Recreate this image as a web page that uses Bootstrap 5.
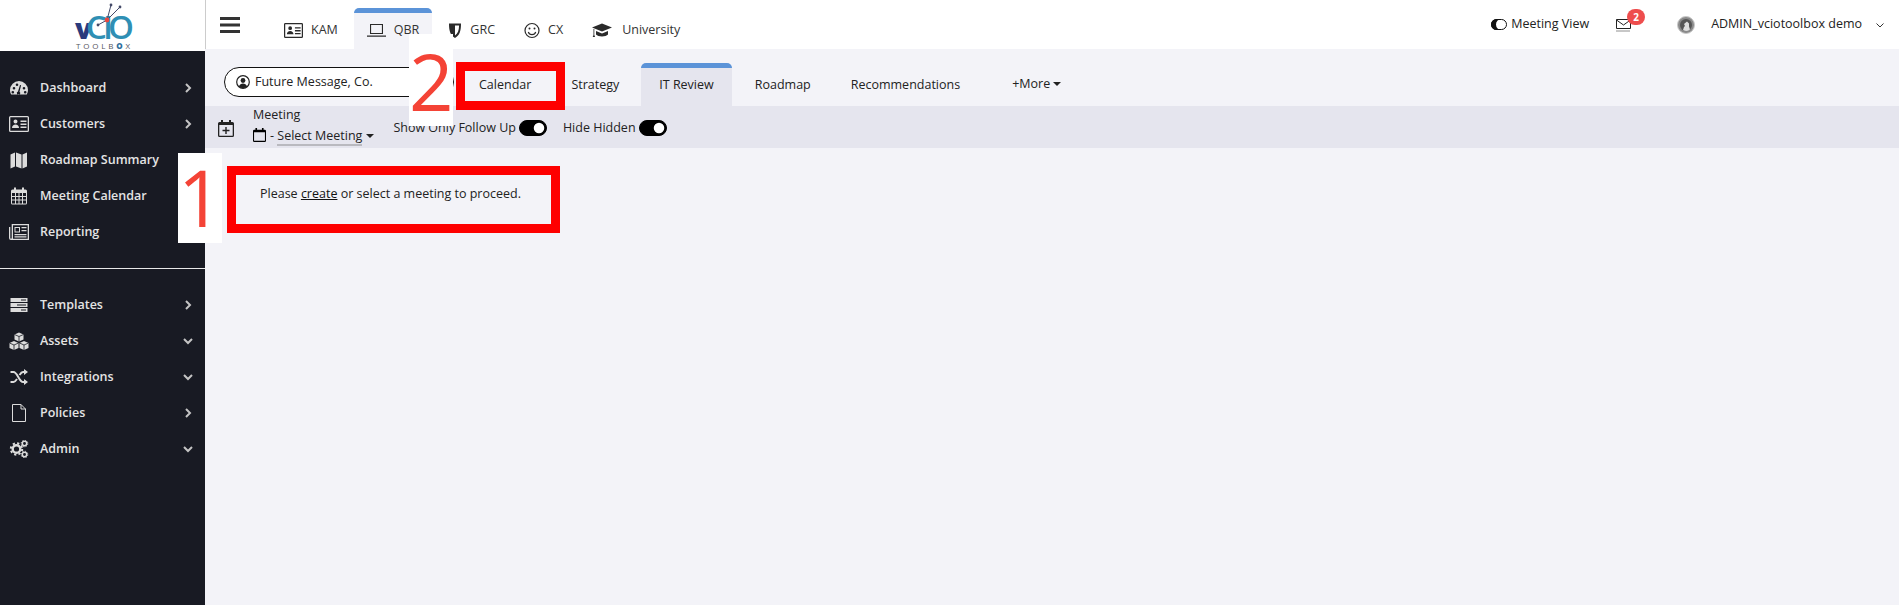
<!DOCTYPE html>
<html lang="en">
<head>
  <meta charset="UTF-8" />
  <title>vCIO Toolbox</title>
  <link rel="stylesheet" href="https://cdn.jsdelivr.net/npm/bootstrap@5.3.0/dist/css/bootstrap.min.css" />
  <style>
    html, body { height: 100%; }
    body { font-family: "Open Sans", "Noto Sans", sans-serif; font-size: 12.5px; color: #222; background: #f3f3f8; overflow: hidden; }
    svg { display: block; flex: none; }

    /* sidebar */
    .side-col { width: 205px; flex: none; background: #181a23; }
    .logo-box { height: 51px; background: #fff; }
    .side-menu { padding-top: 19px; }
    .side-menu .nav-link { height: 36px; padding: 0 12px 0 9px; color: #e4e4e4; font-weight: 600; font-size: 12.5px; }
    .side-ico { width: 20px; height: 18px; margin-right: 11px; fill: #dcdcdc; }
    .side-arrow { width: 10px; height: 10px; margin-left: auto; fill: none; stroke: #c4c4c4; stroke-width: 2; }
    .side-rule { height: 1px; background: #e8e8e8; margin: 18px 0 18px; opacity: 1; border: 0; }

    /* top header */
    .top-bar { height: 49px; background: #fff; padding: 0 0 0 14px; border-left: 1px solid #ccc; }
    .burger { width: 20px; height: 16px; margin-right: 31px; }
    .top-tab { height: 41px; margin-top: 8px; margin-right: 3px; padding: 0 13px 2px; color: #333; gap: 8px; border-top: 5px solid transparent; border-radius: 5px 5px 0 0; }
    .top-tab.on { background: #f3f3f8; border-top-color: #5b93d8; }
    .top-ico { width: 19px; height: 17px; fill: #2a2a2a; }
    .shield-ico { width: 14px; }
    .face-ico { width: 16px; }
    .cap-ico { width: 20px; margin-right: 2px; }
    .top-right { color: #222; }
    .mail-badge { top: -9px; left: 11px; width: 18px; height: 16px; font-size: 10px; line-height: 16px; padding: 0; background: #ee4d4d; }
    .mail-link { margin-left: 27px; }
    .user-pic { width: 18px; height: 18px; margin-left: 46px; }
    .user-name { margin-left: 16px; }
    .user-caret { margin: 0 14px 0 13px; }

    /* second row */
    .sub-bar { height: 57px; padding-left: 19px; }
    .client-pill { width: 230px; height: 30px; margin-top: 18px; padding-left: 11px; gap: 5px; background: #fff; border: 1px solid #111; border-radius: 15px; }
    .sub-tabs { margin-left: 5px; padding-top: 14px; }
    .sub-tab { height: 43px; padding: 0 20px 4px; color: #222; border-top: 5px solid transparent; border-radius: 5px 5px 0 0; }
    .sub-tab.on { background: #e5e5ee; border-top-color: #5b93d8; padding: 0 18px 4px; margin: 0 3px 0 2px; }
    .sub-more { margin-left: 12px; padding-bottom: 6px; color: #222; }
    .sub-more::after { vertical-align: 2px; border-top-width: 4px; border-right-width: 4px; border-left-width: 4px; margin-left: 3px; }

    /* toolbar */
    .tool-bar { height: 42px; background: #e5e5ee; padding-left: 13px; }
    .cal-ico { width: 16px; height: 17px; fill: #222; margin-top: 2px; }
    .meet-pick { margin-left: 19px; margin-right: 19px; line-height: 17px; margin-top: -5px; }
    .meet-link { color: #222; border-bottom: 2px solid #b9b9bf; }
    .meet-caret::after { vertical-align: 2px; border-top-width: 4px; border-right-width: 4px; border-left-width: 4px; margin-left: 4px; }
    .toggle-row { margin-top: 2px; }
    .follow-switch { min-height: 0; padding: 0; margin: 0 0 0 3px; }
    .follow-switch .form-check-input { float: none; display: block; margin: 0; width: 28px; height: 16px; background-color: #000; border-color: #000; }
    .hide-label { margin-left: 16px; }

    .msg-area { padding: 37px 0 0 55px; }
    .msg-area a { color: #111; }

    /* annotation marks on the screenshot */
    .mark-white { position: absolute; background: #fff; }
    .mark-red { position: absolute; border: 9px solid #fe0000; }
    .mark-digit { position: absolute; color: #f44336; font-family: "Open Sans", sans-serif; font-size: 78px; line-height: 1; }
    .mark-one-box { left: 178px; top: 153px; width: 44px; height: 90px; }
    .mark-one { left: 178px; top: 158px; }
    .mark-one-red { left: 227px; top: 166px; width: 333px; height: 67px; }
    .mark-two-box { left: 409px; top: 34px; width: 44px; height: 92px; }
    .mark-two { left: 409px; top: 42px; }
    .mark-two-red { left: 456px; top: 62px; width: 109px; height: 48px; }
  </style>
</head>
<body>
  <svg width="0" height="0" class="position-absolute">
    <symbol id="i-card" viewBox="0 0 20 16"><path fill-rule="evenodd" d="M1.500 0h17A1.500 1.500 0 0 1 20 1.500v13a1.500 1.500 0 0 1-1.500 1.500h-17A1.500 1.500 0 0 1 0 14.500v-13A1.500 1.500 0 0 1 1.500 0zm0 1.300a.2.2 0 0 0-.2.2v13c0 .1.100.2.2.2h17a.2.2 0 0 0 .2-.2v-13a.2.2 0 0 0-.2-.2zM6.500 3.500a2 2 0 1 1 0 4 2 2 0 0 1 0-4zM3 12c0-2 1.500-3.500 3.500-3.500S10 10 10 12zM11.500 4.500h6V6h-6zm0 3h6V9h-6zm0 3h6V12h-6z"/></symbol>
    <symbol id="i-cal" viewBox="0 0 16 17"><path fill-rule="evenodd" d="M3 0h2v2h6V0h2v2h1.500A1.500 1.500 0 0 1 16 3.500v12a1.500 1.500 0 0 1-1.500 1.500h-13A1.500 1.500 0 0 1 0 15.500v-12A1.500 1.500 0 0 1 1.500 2H3zM1.300 5v10.500c0 .1.100.2.2.2h13a.2.2 0 0 0 .2-.2V5z"/></symbol>
    <symbol id="i-arrow-r" viewBox="0 0 10 10"><path d="M3 1l4 4-4 4"/></symbol>
    <symbol id="i-arrow-d" viewBox="0 0 10 10"><path d="M1 3l4 4 4-4"/></symbol>
  </svg>

  <div class="d-flex h-100">
    <aside class="side-col">
      <div class="logo-box">
        <svg width="205" height="51" viewBox="0 0 205 51">
          <text font-family="Open Sans, sans-serif">
            <tspan x="75" y="39" font-weight="800" font-size="28" fill="#2a3a7c">v</tspan><tspan x="86 103 108" y="39" font-weight="600" font-size="33" fill="#2f8fb4">CIO</tspan>
            <tspan x="76" y="49" font-size="8" fill="#555560" textLength="54">TOOLB<tspan font-weight="800" fill="#2f6f9c">O</tspan>X</tspan>
          </text>
          <path d="M107 20L111 5M107 20L120 7M107 20L98 25" stroke="#444a68" stroke-width="1" fill="none"/>
          <circle cx="111" cy="5" r="1.400" fill="#444a68"/><circle cx="120" cy="7" r="1.400" fill="#444a68"/><circle cx="98" cy="25" r="1.400" fill="#444a68"/>
          <circle cx="107" cy="20" r="2.400" fill="#e8473f"/>
        </svg>
      </div>
      <nav class="side-menu nav flex-column">
        <a class="nav-link d-flex align-items-center" href="#">
          <svg class="side-ico" viewBox="0 0 20 18"><path fill-rule="evenodd" d="M10 2a9 9 0 0 0-9 9c0 1.700.5 3.300 1.200 4.600h15.600A9 9 0 0 0 19 11a9 9 0 0 0-9-9zM5 8a1.300 1.300 0 1 1 0 2.600A1.300 1.300 0 0 1 5 8zm3-3.500a1.300 1.300 0 1 1 0 2.600 1.300 1.300 0 0 1 0-2.600zM15 8a1.300 1.300 0 1 1 0 2.600A1.300 1.300 0 0 1 15 8zM9 12.500L11 6l1.100.3-1.600 6.400a1.700 1.700 0 1 1-1.500-.2zM3.800 12a1.300 1.300 0 1 1 0 2.600 1.300 1.300 0 0 1 0-2.600zm12.400 0a1.300 1.300 0 1 1 0 2.600 1.300 1.300 0 0 1 0-2.600z"/></svg>
          Dashboard
          <svg class="side-arrow"><use href="#i-arrow-r"/></svg>
        </a>
        <a class="nav-link d-flex align-items-center" href="#">
          <svg class="side-ico"><use href="#i-card"/></svg>
          Customers
          <svg class="side-arrow"><use href="#i-arrow-r"/></svg>
        </a>
        <a class="nav-link d-flex align-items-center" href="#">
          <svg class="side-ico" viewBox="0 0 20 18"><path d="M1.500 3.500l4.500-2v14l-4.500 2zM7 1.500l5.500 2v14l-5.500-2zM13.500 3.500l4.500-2v14l-4.500 2z"/></svg>
          Roadmap Summary
        </a>
        <a class="nav-link d-flex align-items-center" href="#">
          <svg class="side-ico" viewBox="-2 0 20 17"><path fill-rule="evenodd" d="M3 0h2v2h6V0h2v2h1.500A1.500 1.500 0 0 1 16 3.500v12a1.500 1.500 0 0 1-1.500 1.500h-13A1.500 1.500 0 0 1 0 15.500v-12A1.500 1.500 0 0 1 1.500 2H3zM1 5.500v3h3v-3zm4 0v3h2.500v-3zm3.500 0v3H11v-3zm3.500 0v3h3v-3zM1 9.500v2.500h3V9.500zm4 0v2.500h2.500V9.500zm3.500 0v2.500H11V9.500zm3.500 0v2.500h3V9.500zM1 13v3h3v-3zm4 0v3h2.500v-3zm3.500 0v3H11v-3zm3.500 0v3h3v-3z"/></svg>
          Meeting Calendar
        </a>
        <a class="nav-link d-flex align-items-center" href="#">
          <svg class="side-ico" viewBox="0 0 20 16"><path fill-rule="evenodd" d="M3.500 0H20v16H2a2 2 0 0 1-2-2V3h1.300v11a.7.7 0 0 0 1.400 0V0zM4 1.300v13.400h14.700V1.300zM5.500 3H11v5.500H5.500zm1 1v3.500H10V4zm6-1h5v1.300h-5zm0 3h5v1.300h-5zm-7 4h12v1.300h-12zm0 2.300h12v1.200h-12z"/></svg>
          Reporting
        </a>
        <hr class="side-rule">
        <a class="nav-link d-flex align-items-center" href="#">
          <svg class="side-ico" viewBox="0 0 20 18"><path fill-rule="evenodd" d="M1.500 2h17v4h-17zm0 5h17v4h-17zm0 5h17v4h-17zM12 3.500v1h5v-1zm-4 5v1h9v-1zm4 5v1h5v-1z"/></svg>
          Templates
          <svg class="side-arrow"><use href="#i-arrow-r"/></svg>
        </a>
        <a class="nav-link d-flex align-items-center" href="#">
          <svg class="side-ico" viewBox="0 0 20 18"><path d="M10 .5l4.500 2v5L10 9.500l-4.500-2v-5zM5 9l4.500 2v5L5 18 .5 16v-5zm10 0l4.500 2v5L15 18l-4.500-2v-5z"/><path d="M5.500 2.500L10 4.500l4.500-2M10 4.500v5M.5 11L5 13l4.500-2M5 13v5M10.500 11l4.500 2 4.500-2M15 13v5" fill="none" stroke="#181a23" stroke-width=".8"/></svg>
          Assets
          <svg class="side-arrow"><use href="#i-arrow-d"/></svg>
        </a>
        <a class="nav-link d-flex align-items-center" href="#">
          <svg class="side-ico" viewBox="0 0 20 18"><path d="M1.500 4h3c4 0 5.500 10 9.500 10h2M1.500 14h3c1.500 0 2.500-1.500 3.500-3M10.500 7c1-1.500 2-3 3.500-3h2" fill="none" stroke="#dcdcdc" stroke-width="2"/><path d="M15 1l4 3-4 3zM15 11l4 3-4 3z"/></svg>
          Integrations
          <svg class="side-arrow"><use href="#i-arrow-d"/></svg>
        </a>
        <a class="nav-link d-flex align-items-center" href="#">
          <svg class="side-ico" viewBox="0 0 20 18"><path d="M3.500 .5h8.500l4.500 4.500v12.500h-13zM12 .5V5h4.500" fill="none" stroke="#dcdcdc" stroke-width="1"/></svg>
          Policies
          <svg class="side-arrow"><use href="#i-arrow-r"/></svg>
        </a>
        <a class="nav-link d-flex align-items-center" href="#">
          <svg class="side-ico" viewBox="0 0 20 18"><circle cx="7.500" cy="9" r="3.800" fill="none" stroke="#dcdcdc" stroke-width="2.400"/><circle cx="7.500" cy="9" r="5.700" fill="none" stroke="#dcdcdc" stroke-width="2" stroke-dasharray="2.200 2.270"/><circle cx="15.500" cy="3.500" r="2.200" fill="none" stroke="#dcdcdc" stroke-width="1.500"/><circle cx="15.500" cy="3.500" r="3.300" fill="none" stroke="#dcdcdc" stroke-width="1" stroke-dasharray="1.300 1.290"/><circle cx="15.500" cy="14.500" r="2.200" fill="none" stroke="#dcdcdc" stroke-width="1.500"/><circle cx="15.500" cy="14.500" r="3.300" fill="none" stroke="#dcdcdc" stroke-width="1" stroke-dasharray="1.300 1.290"/></svg>
          Admin
          <svg class="side-arrow"><use href="#i-arrow-d"/></svg>
        </a>
      </nav>
    </aside>

    <main class="flex-grow-1 d-flex flex-column">
      <header class="top-bar d-flex align-items-center">
        <svg class="burger" viewBox="0 0 20 16"><path d="M0 0h20v3H0zm0 6.500h20v3H0zM0 13h20v3H0z" fill="#333"/></svg>
        <a class="top-tab d-flex align-items-center text-decoration-none" href="#"><svg class="top-ico"><use href="#i-card"/></svg>KAM</a>
        <a class="top-tab on d-flex align-items-center text-decoration-none" href="#">
          <svg class="top-ico" viewBox="0 0 19 17"><path fill-rule="evenodd" d="M3 2h13v10H3zm1.100 1.100v7.800h10.800V3.100zM0 13.500h19v1.200H0z"/></svg>QBR</a>
        <a class="top-tab d-flex align-items-center text-decoration-none" href="#">
          <svg class="top-ico shield-ico" viewBox="0 0 14 17"><path fill-rule="evenodd" d="M1 1.500h12c0 7-1 11.500-6 14.500C2 13 1 8.500 1 1.500zM7 3.500v10c2.800-2 3.900-5 4.100-10z"/></svg>GRC</a>
        <a class="top-tab d-flex align-items-center text-decoration-none" href="#">
          <svg class="top-ico face-ico" viewBox="0 0 16 17"><circle cx="8" cy="8.500" r="7" fill="none" stroke="#2a2a2a" stroke-width="1.200"/><circle cx="5.500" cy="6.500" r="1"/><circle cx="10.500" cy="6.500" r="1"/><path d="M4.300 10c1 3.500 6.400 3.500 7.400 0" fill="none" stroke="#2a2a2a" stroke-width="1.200"/></svg>CX</a>
        <a class="top-tab d-flex align-items-center text-decoration-none" href="#">
          <svg class="top-ico cap-ico" viewBox="0 0 20 17"><path d="M10 1.500L20 5.500 10 9.500 0 5.500zM4 9l6 2.500L16 9v3.500c-2 2.500-10 2.500-12 0zM1.500 7h.8v6l.8 2H.7l.8-2z"/></svg>University</a>
        <div class="top-right ms-auto d-flex align-items-center">
          <svg width="16" height="11" viewBox="0 0 16 11" class="me-1"><rect x=".5" y=".5" width="15" height="10" rx="5" fill="#fff" stroke="#111"/><path d="M5.500 0h5v0a5.500 5.500 0 0 0 0 11h-5a5.500 5.500 0 0 1 0-11z" fill="#111"/></svg>
          <span>Meeting View</span>
          <span class="mail-link position-relative">
            <svg width="15" height="14" viewBox="0 0 15 14"><path d="M.5 1.500h14v9H.5zM.5 2l7 5 7-5" fill="none" stroke="#222"/><path d="M.5 13h14" stroke="#222" stroke-dasharray="1 1"/></svg>
            <span class="badge rounded-pill position-absolute mail-badge">2</span>
          </span>
          <svg class="user-pic" viewBox="0 0 18 18"><circle cx="9" cy="9" r="8.500" fill="#8a8a8a" stroke="#c9c9c9"/><circle cx="9" cy="9" r="6" fill="#555"/><path d="M6 14l1-3 1-1-1-2 3-2.500 2 2v3l1 3a6 6 0 0 1-7 .5z" fill="#ddd"/></svg>
          <span class="user-name">ADMIN_vciotoolbox demo</span>
          <svg class="user-caret" width="10" height="10" viewBox="0 0 10 10"><path d="M1.500 3.500L5 7l3.500-3.500" fill="none" stroke="#333"/></svg>
        </div>
      </header>

      <div class="sub-bar d-flex">
        <div class="client-pill d-flex align-items-center">
          <svg width="14" height="14" viewBox="0 0 14 14"><circle cx="7" cy="7" r="6.300" fill="none" stroke="#222" stroke-width="1.200"/><circle cx="7" cy="5.500" r="2.400" fill="#222"/><path d="M2.800 11.500c.8-2 2.500-3 4.200-3s3.400 1 4.200 3a6 6 0 0 1-8.400 0z" fill="#222"/></svg>
          Future Message, Co.
        </div>
        <nav class="sub-tabs d-flex align-items-start">
          <a class="sub-tab d-flex align-items-center text-decoration-none" href="#">Calendar</a>
          <a class="sub-tab d-flex align-items-center text-decoration-none" href="#">Strategy</a>
          <a class="sub-tab on d-flex align-items-center text-decoration-none" href="#">IT Review</a>
          <a class="sub-tab d-flex align-items-center text-decoration-none" href="#">Roadmap</a>
          <a class="sub-tab d-flex align-items-center text-decoration-none" href="#">Recommendations</a>
          <a class="sub-tab sub-more dropdown-toggle d-flex align-items-center text-decoration-none" href="#">+More</a>
        </nav>
      </div>

      <div class="tool-bar d-flex align-items-center">
        <svg class="cal-ico" viewBox="0 0 16 17"><path fill-rule="evenodd" d="M3 0h2v2h6V0h2v2h1.500A1.500 1.500 0 0 1 16 3.500v12a1.500 1.500 0 0 1-1.500 1.500h-13A1.500 1.500 0 0 1 0 15.500v-12A1.500 1.500 0 0 1 1.500 2H3zM1.300 5v10.500c0 .1.100.2.2.2h13a.2.2 0 0 0 .2-.2V5zM7.300 7h1.400v2.800h2.800v1.400H8.700V14H7.300v-2.800H4.500V9.800h2.800z"/></svg>
        <div class="meet-pick">
          <div>Meeting</div>
          <div class="d-flex align-items-center gap-1 mt-1">
            <svg width="13" height="14" viewBox="0 0 16 17"><use href="#i-cal"/></svg>
            <span class="meet-caret dropdown-toggle">- <span class="meet-link">Select Meeting</span></span>
          </div>
        </div>
        <div class="toggle-row d-flex align-items-center">
          <span>Show Only Follow Up</span>
          <div class="form-check form-switch follow-switch"><input class="form-check-input" type="checkbox" checked></div>
          <span class="hide-label">Hide Hidden</span>
          <div class="form-check form-switch follow-switch"><input class="form-check-input" type="checkbox" checked></div>
        </div>
      </div>

      <div class="msg-area">Please <a href="#">create</a> or select a meeting to proceed.</div>
    </main>
  </div>

  <!-- annotation marks painted on the original screenshot -->
  <div class="mark-white mark-one-box"></div>
  <div class="mark-digit mark-one">1</div>
  <div class="mark-red mark-one-red"></div>
  <div class="mark-white mark-two-box"></div>
  <div class="mark-digit mark-two">2</div>
  <div class="mark-red mark-two-red"></div>
</body>
</html>
